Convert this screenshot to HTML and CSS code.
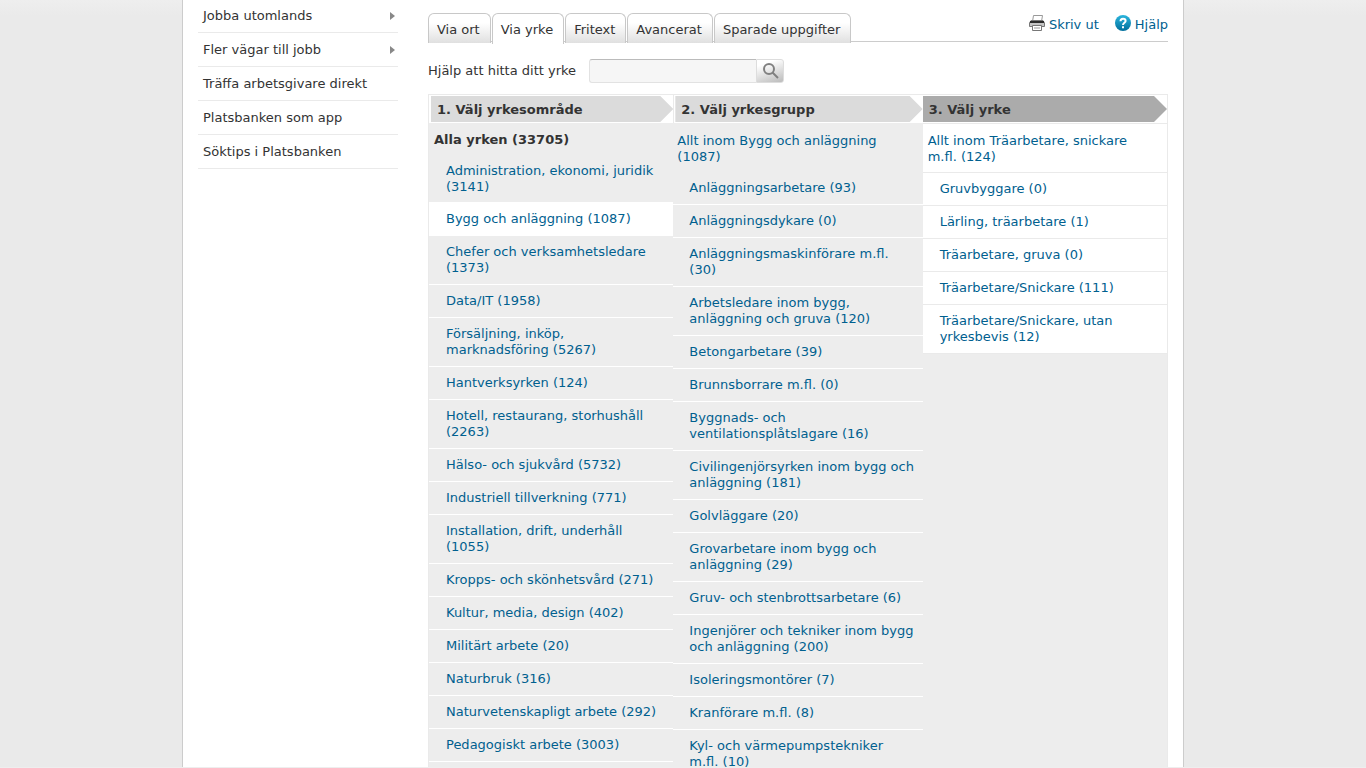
FILE: index.html
```html
<!DOCTYPE html>
<html lang="sv">
<head>
<meta charset="utf-8">
<title>Platsbanken - Via yrke</title>
<link rel="stylesheet" href="styles.css">
</head>
<body>
<div class="page">
  <nav class="sidebar" aria-label="Undermeny">
    <ul class="menu">
      <li><a class="has-children" href="#">Jobba utomlands</a></li>
      <li><a class="has-children" href="#">Fler vägar till jobb</a></li>
      <li><a href="#">Träffa arbetsgivare direkt</a></li>
      <li><a href="#">Platsbanken som app</a></li>
      <li><a href="#">Söktips i Platsbanken</a></li>
    </ul>
  </nav>
  <main class="content">
    <div class="topbar">
      <nav class="tabs" aria-label="Sökvägar">
        <a class="tab" href="#">Via ort</a>
        <a class="tab active" href="#" aria-current="page">Via yrke</a>
        <a class="tab" href="#">Fritext</a>
        <a class="tab" href="#">Avancerat</a>
        <a class="tab" href="#">Sparade uppgifter</a>
      </nav>
      <div class="tools">
        <a class="tool" href="#">
          <svg width="16" height="16" viewBox="0 0 16 16" aria-hidden="true">
            <path d="M3.500 6.500 L4.500 .5 H13.500 L12.500 6.500Z" fill="#fff" stroke="#999"/>
            <path d="M2 5.500 H14 L15.500 8 V11.500 H.5 V8Z" fill="#c4c4c4" stroke="#777"/>
            <path d="M1 6 H15 V8 H1Z" fill="#2b2b2b"/>
            <path d="M3.500 10.500 H12.500 V15.500 H3.500Z" fill="#fff" stroke="#777"/>
            <path d="M5 13 H11" stroke="#999"/>
          </svg>
          Skriv ut</a>
        <a class="tool" href="#">
          <svg width="16" height="16" viewBox="0 0 16 16" aria-hidden="true">
            <defs><linearGradient id="help" x1="0" y1="0" x2="0" y2="1"><stop offset="0" stop-color="#2bb5dd"/><stop offset="1" stop-color="#006f9c"/></linearGradient></defs>
            <circle cx="8" cy="8" r="8" fill="url(#help)"/>
            <path d="M5.500 6.200 C5.500 2.800 10.600 3 10.600 6 C10.600 7.800 8 7.800 8 10" fill="none" stroke="#fff" stroke-width="2"/>
            <path d="M7 11.200 H9 V13.200 H7Z" fill="#fff"/>
          </svg>
          Hjälp</a>
      </div>
    </div>
    <form class="search">
      <label for="yrke">Hjälp att hitta ditt yrke</label>
      <div class="search-box">
        <input id="yrke" type="text">
        <button type="button" aria-label="Sök">
          <svg width="18" height="18" viewBox="0 0 18 18" aria-hidden="true">
            <circle cx="7" cy="7" r="5" fill="none" stroke="#808080" stroke-width="2"/>
            <path d="M10.500 10.500 L16 16" stroke="#808080" stroke-width="2"/>
          </svg>
        </button>
      </div>
    </form>
    <div class="picker">
      <section class="column areas">
        <h2><span>1. Välj yrkesområde</span></h2>
        <p class="all current">Alla yrken (33705)</p>
        <ul class="list">
          <li class="plain"><a href="#">Administration, ekonomi, juridik (3141)</a></li>
          <li class="selected"><a href="#">Bygg och anläggning (1087)</a></li>
          <li><a href="#">Chefer och verksamhetsledare (1373)</a></li>
          <li><a href="#">Data/IT (1958)</a></li>
          <li><a href="#">Försäljning, inköp, marknadsföring (5267)</a></li>
          <li><a href="#">Hantverksyrken (124)</a></li>
          <li><a href="#">Hotell, restaurang, storhushåll (2263)</a></li>
          <li><a href="#">Hälso- och sjukvård (5732)</a></li>
          <li><a href="#">Industriell tillverkning (771)</a></li>
          <li><a href="#">Installation, drift, underhåll (1055)</a></li>
          <li><a href="#">Kropps- och skönhetsvård (271)</a></li>
          <li><a href="#">Kultur, media, design (402)</a></li>
          <li><a href="#">Militärt arbete (20)</a></li>
          <li><a href="#">Naturbruk (316)</a></li>
          <li><a href="#">Naturvetenskapligt arbete (292)</a></li>
          <li><a href="#">Pedagogiskt arbete (3003)</a></li>
        </ul>
      </section>
      <section class="column groups">
        <h2><span>2. Välj yrkesgrupp</span></h2>
        <p class="all"><a href="#">Allt inom Bygg och anläggning (1087)</a></p>
        <ul class="list">
          <li><a href="#">Anläggningsarbetare (93)</a></li>
          <li><a href="#">Anläggningsdykare (0)</a></li>
          <li><a href="#">Anläggningsmaskinförare m.fl. (30)</a></li>
          <li><a href="#">Arbetsledare inom bygg, anläggning och gruva (120)</a></li>
          <li><a href="#">Betongarbetare (39)</a></li>
          <li><a href="#">Brunnsborrare m.fl. (0)</a></li>
          <li><a href="#">Byggnads- och ventilationsplåtslagare (16)</a></li>
          <li><a href="#">Civilingenjörsyrken inom bygg och anläggning (181)</a></li>
          <li><a href="#">Golvläggare (20)</a></li>
          <li><a href="#">Grovarbetare inom bygg och anläggning (29)</a></li>
          <li><a href="#">Gruv- och stenbrottsarbetare (6)</a></li>
          <li><a href="#">Ingenjörer och tekniker inom bygg och anläggning (200)</a></li>
          <li><a href="#">Isoleringsmontörer (7)</a></li>
          <li><a href="#">Kranförare m.fl. (8)</a></li>
          <li><a href="#">Kyl- och värmepumpstekniker m.fl. (10)</a></li>
        </ul>
      </section>
      <section class="column jobs">
        <h2><span>3. Välj yrke</span></h2>
        <p class="all"><a href="#">Allt inom Träarbetare, snickare m.fl. (124)</a></p>
        <ul class="list">
          <li><a href="#">Gruvbyggare (0)</a></li>
          <li><a href="#">Lärling, träarbetare (1)</a></li>
          <li><a href="#">Träarbetare, gruva (0)</a></li>
          <li><a href="#">Träarbetare/Snickare (111)</a></li>
          <li><a href="#">Träarbetare/Snickare, utan yrkesbevis (12)</a></li>
        </ul>
      </section>
    </div>
  </main>
</div>
</body>
</html>
```
FILE: styles.css
```css
* { box-sizing: border-box; }

body {
  margin: 0;
  height: 100vh;
  overflow: hidden;
  border-bottom: 1px solid #eee;
  background: linear-gradient(#eee, #eaeaea 16px);
  color: #333;
  font: 13px/16px Verdana, "DejaVu Sans", sans-serif;
}

a { color: #00608f; text-decoration: none; }
ul, h2, p { margin: 0; padding: 0; list-style: none; }

.page {
  display: flex;
  gap: 30px;
  max-width: 1002px;
  min-height: 100vh;
  margin: 0 auto;
  padding: 0 15px;
  border: solid #ccc;
  border-width: 0 1px;
  background: #fff;
}

.sidebar { flex: 0 0 200px; }
.content {
  display: flex;
  flex: 1;
  flex-direction: column;
  min-width: 0;
  padding-top: 13px;
}

.menu { margin-top: -1px; }
.menu a {
  display: flex;
  align-items: center;
  justify-content: space-between;
  height: 33px;
  padding: 1px 3px 0 5px;
  color: #333;
}
.menu li { border-bottom: 1px solid #eaeaea; }
.has-children::after {
  content: "";
  border: solid transparent;
  border-width: 4px 0 4px 5px;
  border-left-color: #888;
}

.topbar {
  display: flex;
  justify-content: space-between;
  height: 29px;
  border-bottom: 1px solid #ccc;
}
.tabs { display: flex; gap: 1px; height: 30px; }
.tab {
  padding: 8px 10px 0 8px;
  border: 1px solid #c8c8c8;
  border-bottom: 0;
  border-radius: 6px 6px 0 0;
  background: linear-gradient(#fff 30%, #e0e0e0);
  color: #333;
}
.tab.active { height: 31px; background: #fff; }

.tools { display: flex; gap: 16px; padding-top: 2px; }
.tool { display: flex; gap: 4px; height: 16px; line-height: 20px; }

.search {
  display: flex;
  align-items: center;
  gap: 13px;
  height: 24px;
  margin: 17px 0 11px;
}
.search-box { display: flex; height: 24px; }
.search input {
  width: 167px;
  padding: 0 6px;
  border: 1px solid #e2e2e2;
  border-top-color: #bbb;
  border-right: 0;
  border-radius: 3px 0 0 3px;
  background: #f6f6f6;
  font: inherit;
}
.search button {
  width: 28px;
  padding: 2px 0 0 2px;
  border: 1px solid #ddd;
  border-radius: 0 3px 3px 0;
  background: linear-gradient(160deg, #fff 20%, #bbb);
}

.picker {
  display: grid;
  flex: 1;
  grid-template-columns: 245fr 250fr 245fr;
  border: solid #eaeaea;
  border-width: 1px 1px 0;
  background: #ededed;
}

.column h2 {
  height: 28px;
  padding: 1px 0 1px 2px;
  background: #fff;
  font-size: 13px;
  line-height: 24px;
}
.column h2 span {
  display: block;
  padding: 2px 0 0 6px;
  background: #dbdbdb;
  clip-path: polygon(0 0, calc(100% - 13px) 0, 100% 50%, calc(100% - 13px) 100%, 0 100%);
}
.groups h2 { border-left: 1px solid #eaeaea; padding-left: 1px; }
.jobs h2 { padding-left: 0; }
.jobs h2 span { background: #ababab; }

.all { padding: 10px 12px 7px 5px; }
.groups .all { padding-left: 4px; }
.current { padding-top: 9px; font-weight: bold; }

.list li {
  display: flex;
  align-items: center;
  min-height: 33px;
  padding: 8px 12px 8px 17px;
  border-bottom: 1px solid #fff;
}
.groups li { padding-right: 8px; padding-left: 16px; }
.list .plain { padding-bottom: 6px; border-bottom-color: transparent; }
.list .selected { min-height: 34px; background: #fff; }

.jobs .all { background: #fff; border: solid #eaeaea; border-width: 1px 0; padding-top: 9px; }
.jobs .list { background: #fff; }
.jobs li { border-bottom-color: #eaeaea; }
```
